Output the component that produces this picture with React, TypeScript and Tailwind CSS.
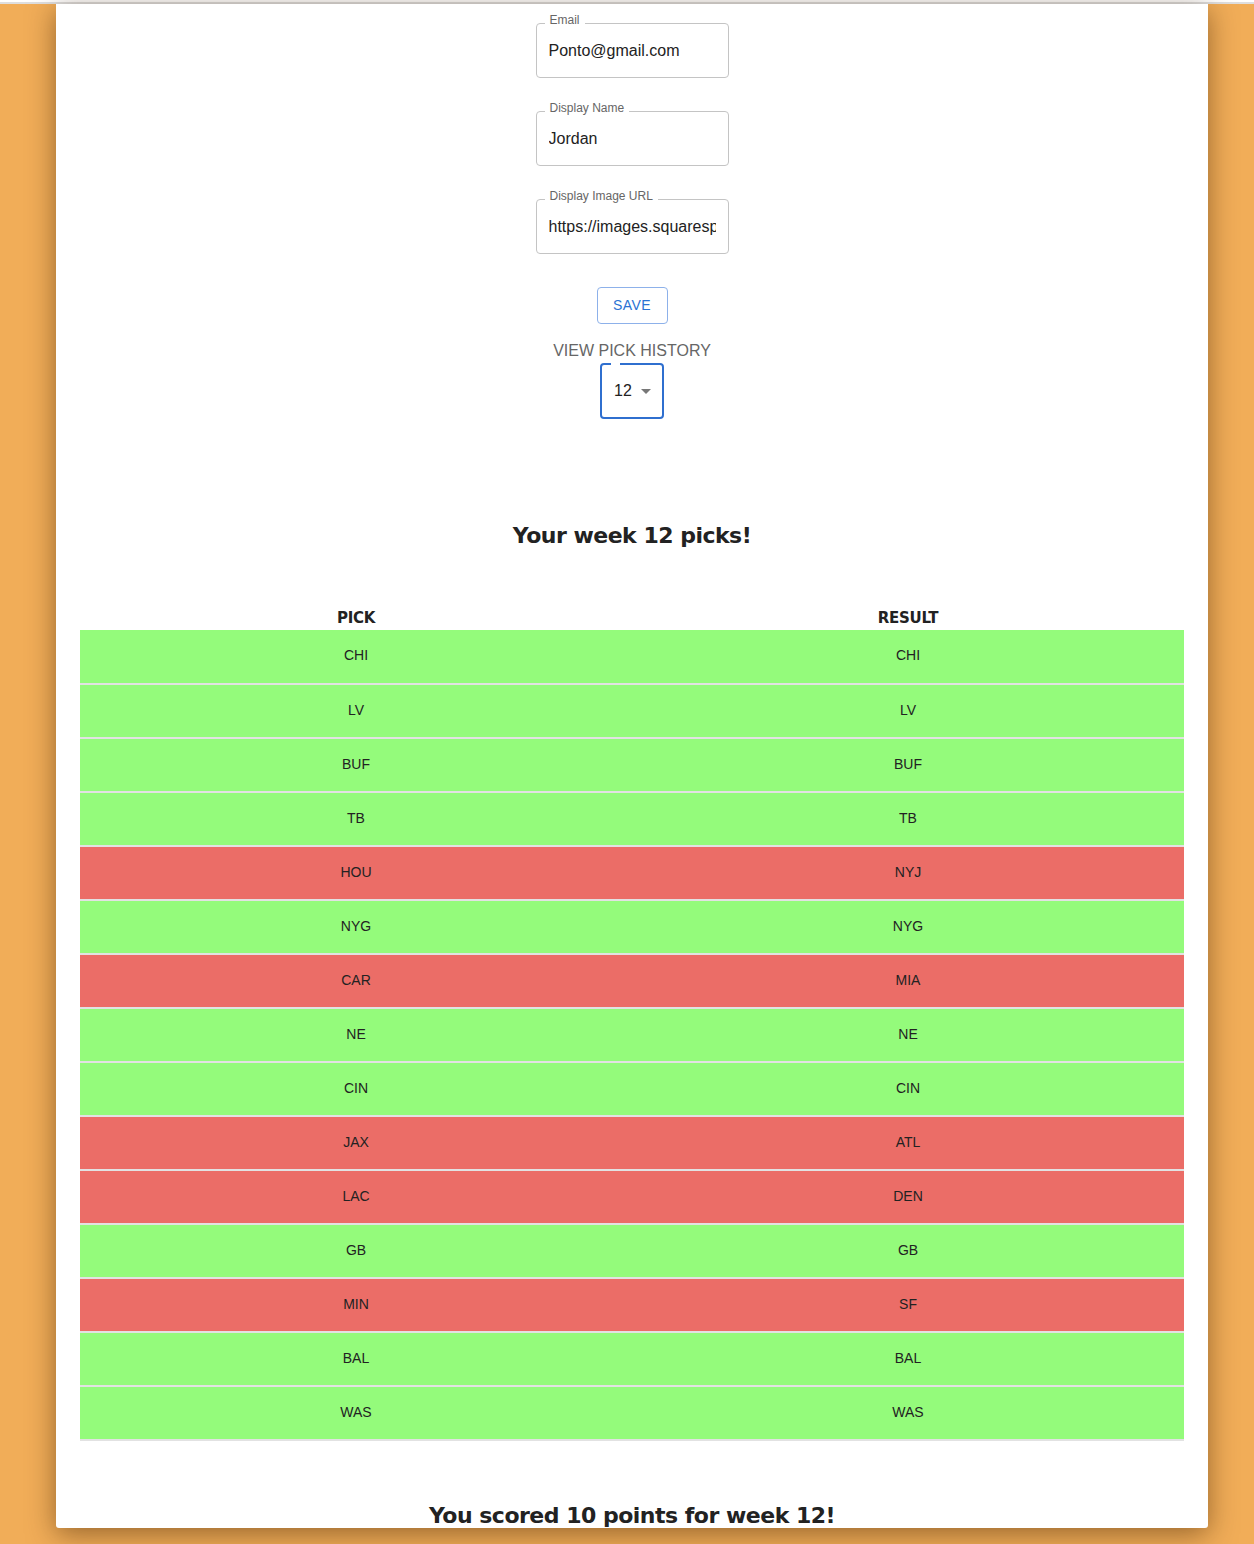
const picks = [
  { pick: 'CHI', result: 'CHI' },
  { pick: 'LV', result: 'LV' },
  { pick: 'BUF', result: 'BUF' },
  { pick: 'TB', result: 'TB' },
  { pick: 'HOU', result: 'NYJ' },
  { pick: 'NYG', result: 'NYG' },
  { pick: 'CAR', result: 'MIA' },
  { pick: 'NE', result: 'NE' },
  { pick: 'CIN', result: 'CIN' },
  { pick: 'JAX', result: 'ATL' },
  { pick: 'LAC', result: 'DEN' },
  { pick: 'GB', result: 'GB' },
  { pick: 'MIN', result: 'SF' },
  { pick: 'BAL', result: 'BAL' },
  { pick: 'WAS', result: 'WAS' },
];

const fields = [
  { label: 'Email', value: 'Ponto@gmail.com' },
  { label: 'Display Name', value: 'Jordan' },
  { label: 'Display Image URL', value: 'https://images.squarespace-cdn.com/content/v1/profile.png' },
];

function OutlinedField({ label, value }: { label: string; value: string }) {
  return (
    <div className="relative w-[193px] h-[55px] rounded-[4px] border border-[#c4c4c4]">
      <span className="absolute -top-[11px] left-[8px] px-[5px] bg-white text-[12px] leading-[14px] text-[#666]">
        {label}
      </span>
      <input
        readOnly
        value={value}
        className="w-full h-full bg-transparent outline-none pl-[12px] pr-[12px] text-[16px] text-[#222]"
        style={{ fontFamily: '"Liberation Sans", Arial, sans-serif' }}
      />
    </div>
  );
}

export default function App() {
  return (
    <div
      className="min-h-[1544px] bg-[#f1ad58] overflow-hidden"
      style={{ fontFamily: '"Liberation Sans", Arial, sans-serif' }}
    >
      <div className="h-[2px] bg-white" />
      <div className="h-[2px] bg-[#dedede]" />
      <div className="ml-[56px] w-[1152px] h-[1524px] bg-white overflow-hidden rounded-b-[3px] shadow-[0_6px_28px_rgba(60,30,0,0.5)]">
        <div className="flex flex-col items-center pt-[19px]">
          <div className="flex flex-col gap-[33px]">
            {fields.map((f) => (
              <OutlinedField key={f.label} label={f.label} value={f.value} />
            ))}
          </div>

          <button className="mt-[33px] w-[71px] h-[37px] rounded-[4px] border border-[#8db1ea] text-[14px] font-medium tracking-[0.4px] text-[#2b72d3]">
            SAVE
          </button>

          <p className="mt-[18px] text-[16px] leading-[18px] text-[#666]">VIEW PICK HISTORY</p>

          <div className="relative mt-[3px] w-[64px] h-[56px] rounded-[4px] border-2 border-[#2f6fcf] flex items-center">
            <span className="absolute -top-[2px] left-[9px] w-[9px] h-[2px] bg-white" />
            <span className="pl-[12px] text-[16px] text-[#222]">12</span>
            <svg viewBox="0 0 24 24" className="absolute right-[4px] top-[14px] w-[24px] h-[24px] fill-[#777]">
              <path d="M7 10l5 5 5-5z" />
            </svg>
          </div>

          <h2
            className="mt-[103px] text-[22px] leading-[28px] font-bold tracking-[-0.5px] text-[#222]"
            style={{ fontFamily: '"DejaVu Sans", Verdana, sans-serif' }}
          >
            Your week 12 picks!
          </h2>

          <table className="mt-[56px] w-[1104px] border-collapse table-fixed">
            <thead>
              <tr
                className="h-[23px] text-[15px] font-bold tracking-[-0.3px] text-[#222]"
                style={{ fontFamily: '"DejaVu Sans", Verdana, sans-serif' }}
              >
                <th className="font-bold pt-[1px]">PICK</th>
                <th className="font-bold pt-[1px]">RESULT</th>
              </tr>
            </thead>
            <tbody>
              {picks.map((row, i) => {
                const hit = row.pick === row.result;
                return (
                  <tr
                    key={i}
                    className={`h-[54px] border-b-2 border-[#e2e2e2] text-[14px] text-[#222] ${
                      hit ? 'bg-[#94fb7b]' : 'bg-[#eb6d67]'
                    }`}
                  >
                    <td className="text-center pb-[1px]">{row.pick}</td>
                    <td className="text-center pb-[1px]">{row.result}</td>
                  </tr>
                );
              })}
            </tbody>
          </table>

          <h2
            className="mt-[61px] text-[22px] leading-[28px] font-bold tracking-[-0.5px] text-[#222]"
            style={{ fontFamily: '"DejaVu Sans", Verdana, sans-serif' }}
          >
            You scored 10 points for week 12!
          </h2>
        </div>
      </div>
    </div>
  );
}
